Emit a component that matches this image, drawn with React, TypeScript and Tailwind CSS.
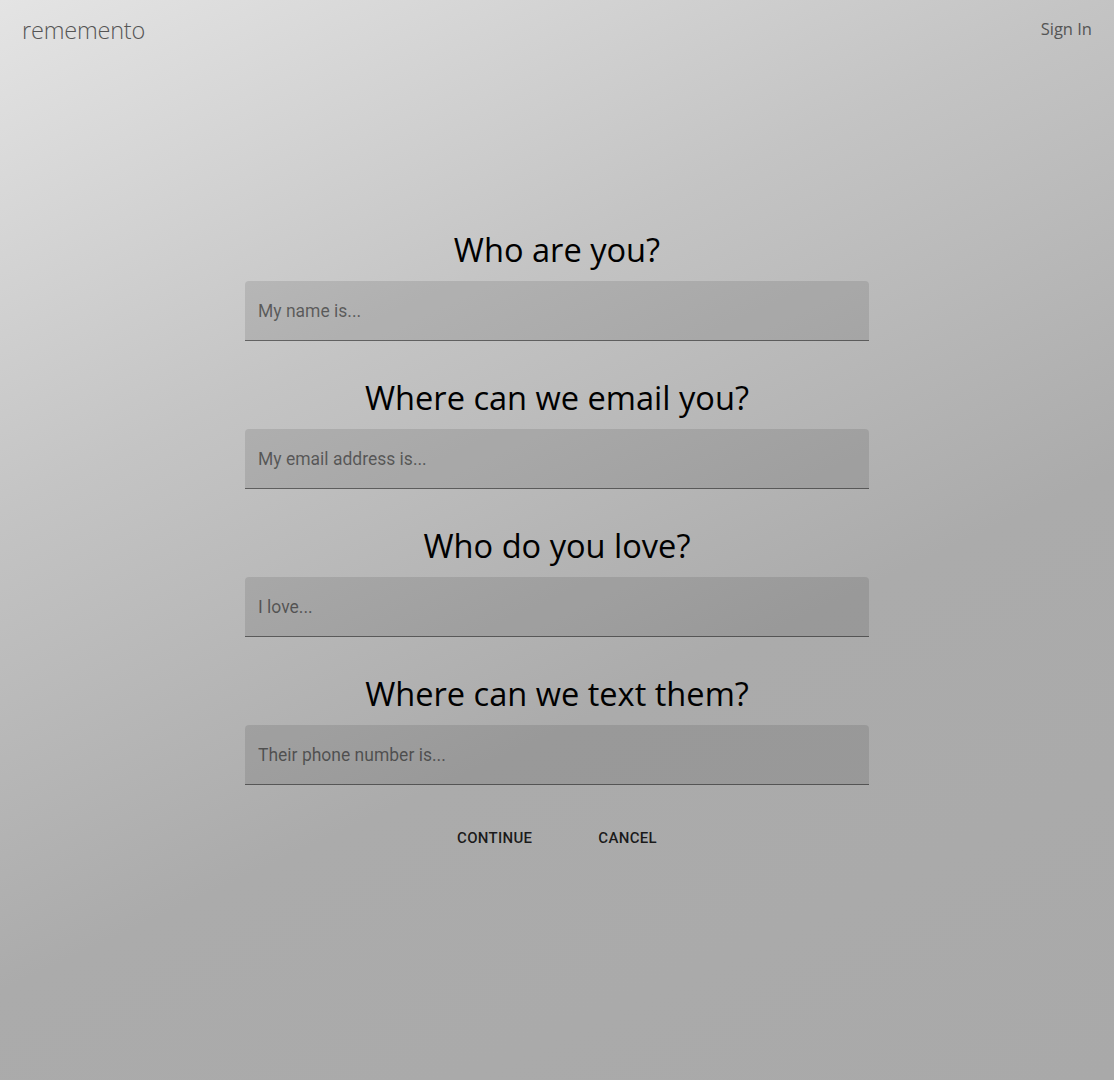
import React, { useState } from 'react';

const FIELDS = [
  { question: 'Who are you?', placeholder: 'My name is...' },
  { question: 'Where can we email you?', placeholder: 'My email address is...' },
  { question: 'Who do you love?', placeholder: 'I love...' },
  { question: 'Where can we text them?', placeholder: 'Their phone number is...' },
];

const App: React.FC = () => {
  const [values, setValues] = useState<string[]>(FIELDS.map(() => ''));

  return (
    <div className="min-h-screen w-full flex flex-col bg-[linear-gradient(155deg,#e4e4e4_0%,#c4c4c4_32%,#ababab_62%,#a9a9a9_100%)] font-['Open_Sans',sans-serif]">
      <header className="h-[60px] flex items-start justify-between pl-[22px] pr-[22px] pt-[14px]">
        <div className="text-[23.5px] font-light text-[#555] leading-8 tracking-[-0.2px]">rememento</div>
        <button className="text-[16.5px] text-[#555] leading-8 -mt-[1px]">Sign In</button>
      </header>

      <main className="flex flex-col items-center pt-[168px] pb-16">
        {FIELDS.map((f, i) => (
          <section key={f.question} className="w-[624px] flex flex-col items-center mb-[35px] last:mb-[32px]">
            <h2 className="h-[44px] leading-[44px] text-[32.6px] text-black mb-[9px]">{f.question}</h2>
            <input
              value={values[i]}
              onChange={e => setValues(v => v.map((x, j) => (j === i ? e.target.value : x)))}
              placeholder={f.placeholder}
              className="w-full h-[60px] pl-[13px] pr-3 bg-black/10 rounded-t-[4px] border-b border-black/45 outline-none font-['Roboto',sans-serif] text-[17.5px] text-black placeholder:text-black/50"
            />
          </section>
        ))}

        <div className="flex items-center gap-[50px] font-['Roboto',sans-serif]">
          <button className="h-9 px-2 text-[15px] font-medium uppercase tracking-[0.3px] text-black/85">Continue</button>
          <button className="h-9 px-2 text-[15px] font-medium uppercase tracking-[0.3px] text-black/85">Cancel</button>
        </div>
      </main>
    </div>
  );
};

export default App;
